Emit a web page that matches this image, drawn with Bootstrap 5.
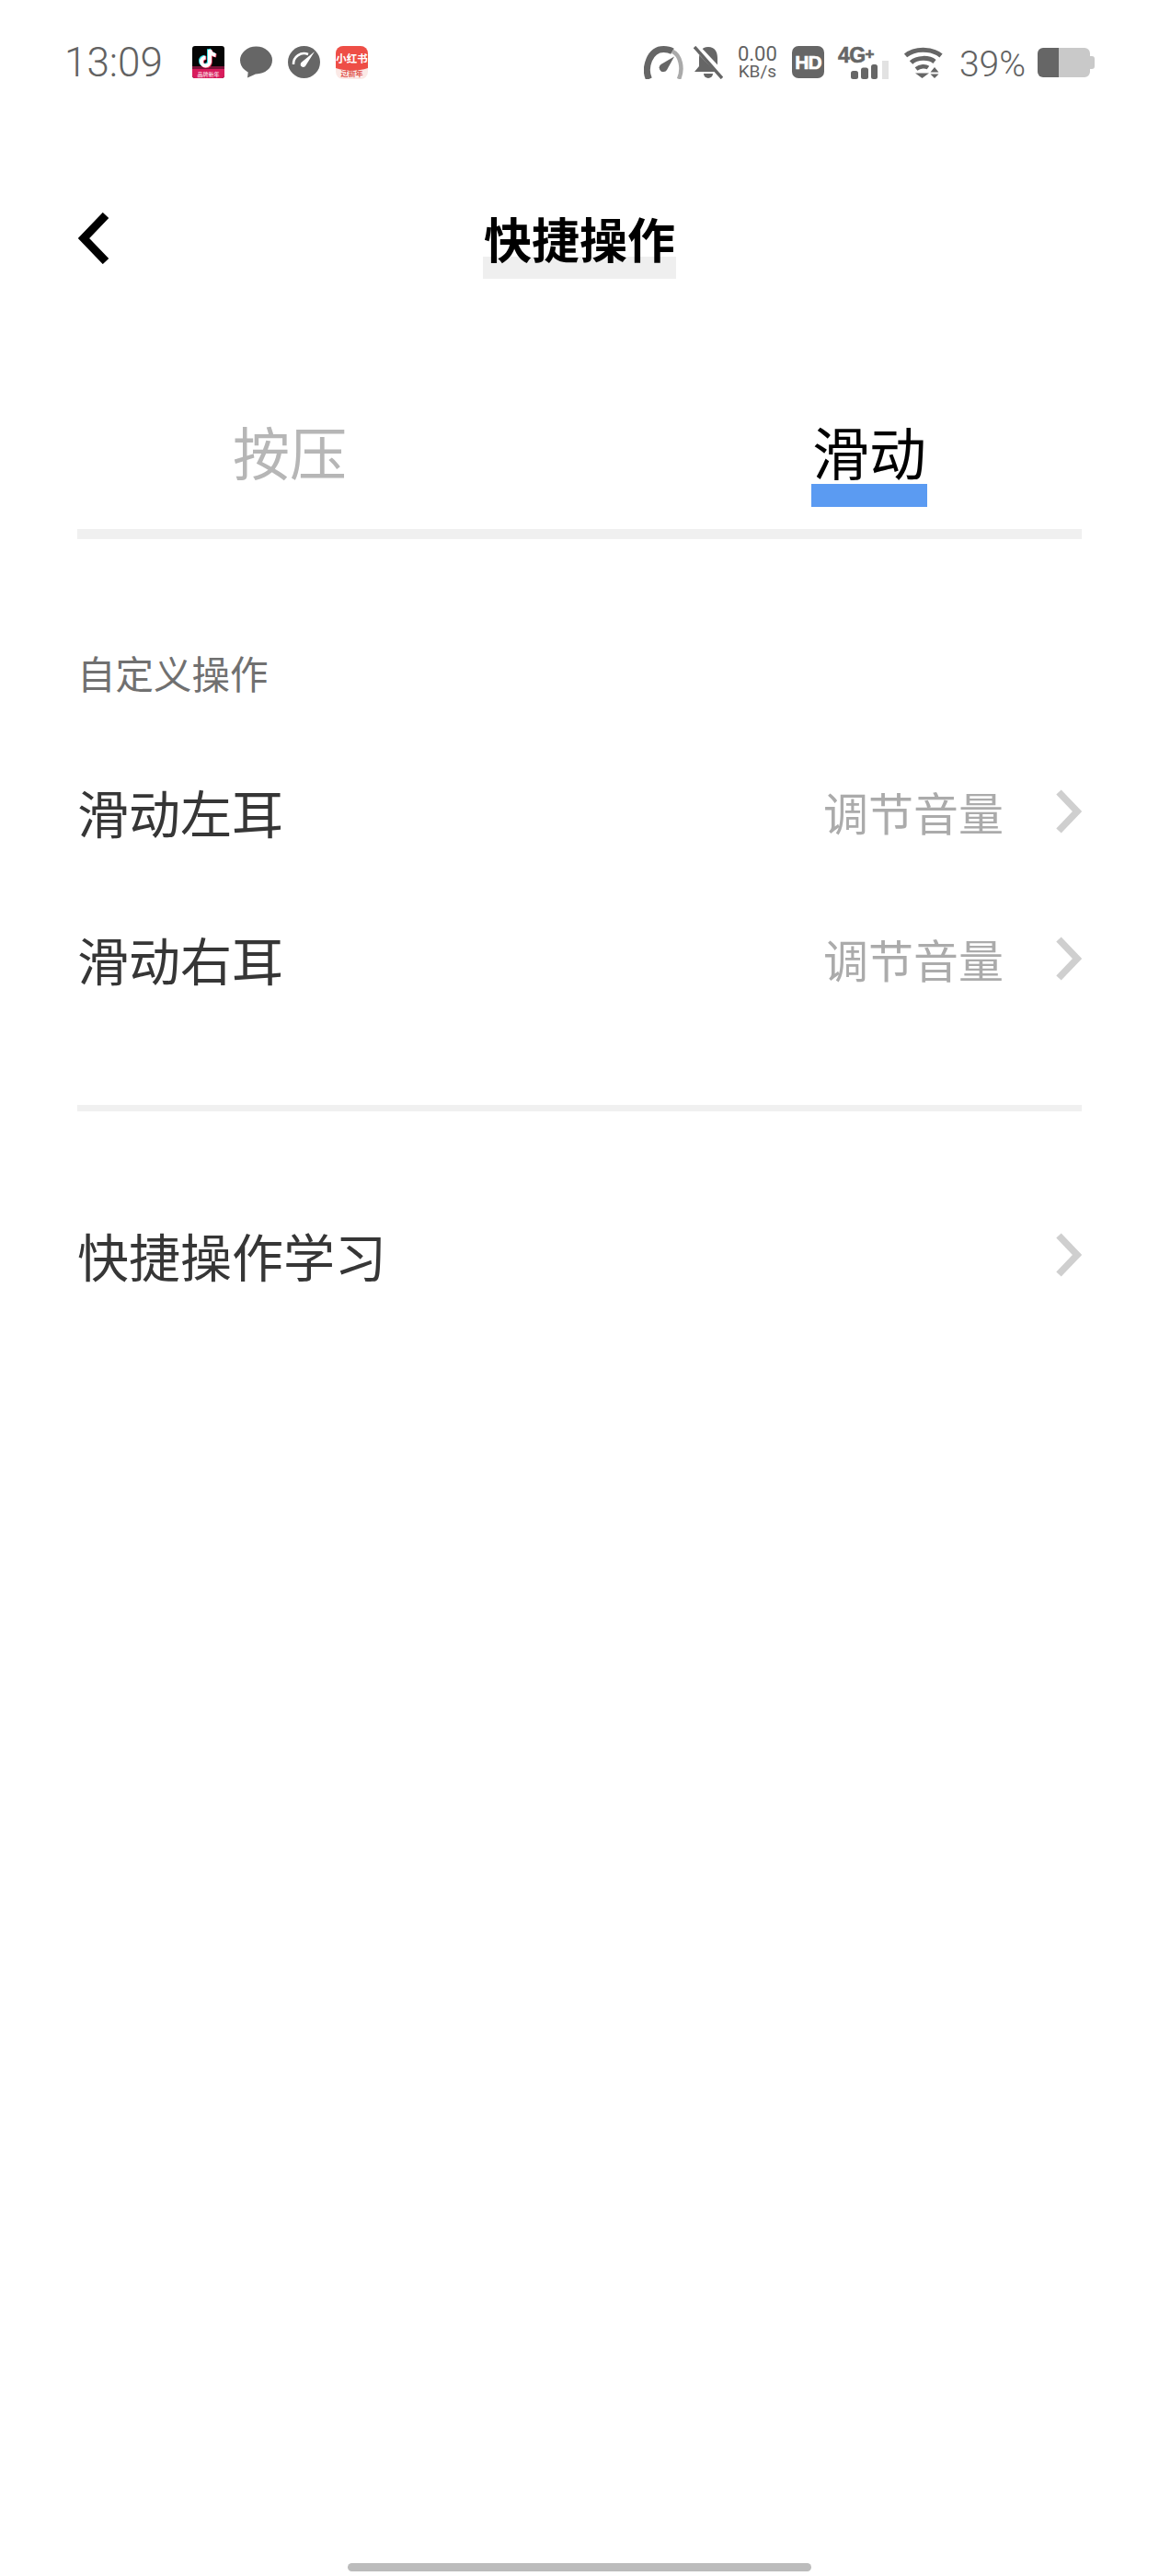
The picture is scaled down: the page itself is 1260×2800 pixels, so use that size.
<!DOCTYPE html>
<html lang="zh">
<head>
    <meta charset="UTF-8">
    <meta name="viewport" content="width=device-width, initial-scale=1.0">
    <title>快捷操作</title>
    <link rel="stylesheet" href="https://cdn.jsdelivr.net/npm/bootstrap@5.3.0/dist/css/bootstrap.min.css">
    <style>
        body { background: #fff; font-family: "Noto Sans CJK SC", "Noto Sans", sans-serif; }
        .screen { width: 1260px; height: 2800px; display: flex; flex-direction: column; }
        .status-bar { height: 135px; padding: 0 70px; font-family: Roboto, "Liberation Sans", sans-serif; color: #626262; }
        .clock { font-size: 44px; font-weight: 300; line-height: 50px; width: 139px; flex: none; }
        .notif-icons { gap: 17px; }
        .notif-icons svg { display: block; }
        .sys-icons { margin-left: auto; }
        .sys-icons > * { flex: none; }
        .sys-bell { margin-left: 11px; }
        .sys-net { margin-left: 16px; width: 43px; text-align: center; line-height: 1; }
        .net-num { font-size: 22px; display: block; line-height: 20px; }
        .net-unit { font-size: 19px; display: block; line-height: 17px; }
        .sys-hd { margin-left: 16px; width: 35px; height: 35px; background: #666; border-radius: 7px; color: #fff; font-weight: 700; font-size: 21px; line-height: 35px; text-align: center; letter-spacing: -1px; -webkit-text-stroke: .6px #fff; font-family: "Liberation Sans", sans-serif; }
        .sys-signal { margin-left: 15px; width: 55px; height: 36px; display: flex; flex-direction: column; }
        .sig-text { font-family: "Liberation Sans", sans-serif; font-size: 23px; font-weight: 700; line-height: 18px; height: 18px; letter-spacing: -.5px; -webkit-text-stroke: .6px #666; color: #666; white-space: nowrap; }
        .sig-text span { font-size: 17px; vertical-align: 4px; }
        .sig-bars { display: block; margin-top: -2px; }
        .sys-wifi { margin-left: 17px; }
        .sys-pct { margin-left: 18px; font-size: 39px; font-weight: 300; line-height: 36px; margin-top: 4px; }
        .sys-batt { margin-left: 13px; }
        .title-bar { padding: 94px 84px 0; }
        .back-icon { width: 36px; flex: none; margin-top: 2px; }
        .title-spacer { width: 36px; flex: none; }
        .title-text { font-size: 52px; font-weight: 700; color: #000; line-height: 60px; height: 74px; padding: 0 1px; background: linear-gradient(transparent 50px, #efefef 50px); }
        .tabs { margin-top: 151px; }
        .tab-item { width: 50%; display: flex; flex-direction: column; align-items: center; font-size: 62px; line-height: 72px; }
        .tab-off { color: #b6b6b6; }
        .tab-on { color: #000; }
        .tab-on i { display: block; width: 126px; height: 25px; background: #5b9bf2; }
        .tab-rule { height: 11px; background: #f0f0f0; margin: 24px 84px 0; }
        .section-label { font-size: 41.500px; color: #707070; line-height: 48px; margin: 121px 84px 47px 84px; }
        .row-item { display: flex; align-items: center; justify-content: space-between; padding: 0 84px 0 84px; height: 160px; font-size: 56px; color: #363636; }
        .row-val { font-size: 49px; color: #ababab; margin-right: 57px; }
        .row-right { display: flex; align-items: center; }
        .rule { height: 7px; background: #f0f0f0; margin: 79px 84px 76px; }
        .home-bar { width: 504px; height: 9px; background: #bcbcbc; border-radius: 5px; margin: 0 auto 5px; }
    </style>
</head>
<body>
<div class="screen">
    <!-- status bar -->
    <div class="status-bar d-flex align-items-center">
        <div class="clock">13:09</div>
        <div class="notif-icons d-flex align-items-center">
            <svg width="35" height="35" viewBox="0 0 35 35">
                <rect width="35" height="35" rx="3" fill="#050505"/>
                <path d="M0 25h35v7a3 3 0 0 1-3 3H3a3 3 0 0 1-3-3z" fill="#d81c5c"/>
                <path d="M0 25h35v-3H0z" fill="#7a1238"/>
                <g fill="none" stroke-width="4">
                    <path d="M19 4v13a4.500 4.500 0 1 1-4.500-4.500M19 4c.6 3.500 3 5.500 6.500 6" stroke="#35e0e6" transform="translate(-1 -.8)"/>
                    <path d="M19 4v13a4.500 4.500 0 1 1-4.500-4.500M19 4c.6 3.500 3 5.500 6.500 6" stroke="#f03a5f" transform="translate(.8 .6)"/>
                    <path d="M19 4v13a4.500 4.500 0 1 1-4.500-4.500M19 4c.6 3.500 3 5.500 6.500 6" stroke="#fff"/>
                </g>
                <text x="17.500" y="32.500" text-anchor="middle" font-size="6" fill="#fff" font-family="Noto Sans CJK SC, sans-serif">品牌新年</text>
            </svg>
            <svg width="35" height="35" viewBox="0 0 35 35">
                <ellipse cx="17.500" cy="15.500" rx="17.500" ry="15" fill="#666"/>
                <path d="M9 26l-1 8.500 9-4z" fill="#666"/>
            </svg>
            <svg width="35" height="35" viewBox="0 0 35 35">
                <circle cx="17.500" cy="17.500" r="17.500" fill="#666"/>
                <path d="M6 20a11.500 11.500 0 0 1 16-11" fill="none" stroke="#fff" stroke-width="2.500"/>
                <path d="M29 6 19.500 21a3 3 0 1 1-4.500-3.500z" fill="#fff"/>
            </svg>
            <svg width="35" height="36" viewBox="0 0 35 36">
                <rect y="0" width="35" height="36" rx="8" fill="#fbe9e6"/>
                <path d="M0 8a8 8 0 0 1 8-8h19a8 8 0 0 1 8 8v16c-11 3.500-24 3.500-35 0z" fill="#ee4e46"/>
                <text x="17.500" y="18" text-anchor="middle" font-size="11.500" font-weight="700" fill="#fff" font-family="Noto Sans CJK SC, sans-serif">小红书</text>
                <text x="17.500" y="33" text-anchor="middle" font-size="8" font-weight="700" fill="#e0574f" font-family="Noto Sans CJK SC, sans-serif">过新年</text>
            </svg>
        </div>
        <div class="sys-icons d-flex align-items-center">
            <svg width="43" height="36" viewBox="0 0 43 36">
                <path d="M5.500 36C0 24 6 3.500 21.500 3.500c3.500 0 7 .8 9.500 2.300" fill="none" stroke="#666" stroke-width="7"/>
                <path d="M31 5.800C40 10 43 25 38 36" fill="none" stroke="#aaa" stroke-width="4.500"/>
                <path d="M33 11.500 25 26a4.500 4.500 0 1 1-6.500-6z" fill="#666"/>
            </svg>
            <svg class="sys-bell" width="32" height="36" viewBox="0 0 32 36">
                <path d="M16 1c7 0 10 5 10 12v9l5 6H1l5-6v-9C6 6 9 1 16 1z" fill="#666"/>
                <path d="M11 30h10a5 5 0 0 1-10 0z" fill="#666"/>
                <path d="M1 -1 33 33" stroke="#fff" stroke-width="7"/>
                <path d="M1 1 31 35" stroke="#666" stroke-width="3.500"/>
            </svg>
            <div class="sys-net"><span class="net-num">0.00</span><span class="net-unit">KB/s</span></div>
            <div class="sys-hd">HD</div>
            <div class="sys-signal">
                <div class="sig-text">4G<span>+</span></div>
                <svg class="sig-bars" width="55" height="20" viewBox="0 16 55 20">
                    <rect x="14" y="27" width="8" height="9" rx="2.500" fill="#666"/>
                    <rect x="25" y="23.500" width="8" height="12.500" rx="2.500" fill="#666"/>
                    <rect x="36" y="20" width="7" height="16" rx="2.500" fill="#666"/>
                    <rect x="48" y="16" width="7" height="20" fill="#e2e2e2"/>
                </svg>
            </div>
            <svg class="sys-wifi" width="42" height="34" viewBox="0 0 42 34">
                <g fill="none" stroke="#666" stroke-width="5">
                    <path d="M1.500 9.500C11 1 30 1 40 9.500"/>
                    <path d="M7.500 17C14 11 27 11 33 16"/>
                </g>
                <path d="M13 24c4.500-3.500 10-3.500 13-1.500" fill="none" stroke="#666" stroke-width="4.500"/>
                <path d="M12 28.500h15l-7.500 5.500z" fill="#666"/>
                <path d="M33 22l-4.500 5.500h9zM28.500 29.500h9L33 34z" fill="#666"/>
            </svg>
            <div class="sys-pct">39%</div>
            <svg class="sys-batt" width="62" height="32" viewBox="0 0 62 32">
                <path d="M6 0h17v32H6a6 6 0 0 1-6-6V6a6 6 0 0 1 6-6z" fill="#666"/>
                <path d="M23 0h28a6 6 0 0 1 6 6v3h2a3 3 0 0 1 3 3v8a3 3 0 0 1-3 3h-2v3a6 6 0 0 1-6 6H23z" fill="#c9c9c9"/>
            </svg>
        </div>
    </div>

    <!-- title -->
    <div class="title-bar d-flex align-items-start">
        <svg class="back-icon" height="56" viewBox="0 0 36 56"><path d="M31 3 7 28l24 25" fill="none" stroke="#000" stroke-width="9"/></svg>
        <div class="flex-grow-1 d-flex justify-content-center"><div class="title-text">快捷操作</div></div>
        <div class="title-spacer"></div>
    </div>

    <!-- tabs -->
    <div class="tabs d-flex">
        <div class="tab-item tab-off">按压</div>
        <div class="tab-item tab-on"><span>滑动</span><i></i></div>
    </div>
    <div class="tab-rule"></div>

    <div class="section-label">自定义操作</div>
    <div class="row-item"><span>滑动左耳</span><span class="row-right"><span class="row-val">调节音量</span><svg width="28" height="48" viewBox="0 0 28 48"><path d="M3 3l20 21L3 45" fill="none" stroke="#cfcfcf" stroke-width="7.500"/></svg></span></div>
    <div class="row-item"><span>滑动右耳</span><span class="row-right"><span class="row-val">调节音量</span><svg width="28" height="48" viewBox="0 0 28 48"><path d="M3 3l20 21L3 45" fill="none" stroke="#cfcfcf" stroke-width="7.500"/></svg></span></div>
    <div class="rule"></div>
    <div class="row-item"><span>快捷操作学习</span><svg width="28" height="48" viewBox="0 0 28 48"><path d="M3 3l20 21L3 45" fill="none" stroke="#cfcfcf" stroke-width="7.500"/></svg></div>

    <div class="mt-auto"><div class="home-bar"></div></div>
</div>
<script src="https://cdn.jsdelivr.net/npm/bootstrap@5.3.0/dist/js/bootstrap.bundle.min.js"></script>
</body>
</html>
